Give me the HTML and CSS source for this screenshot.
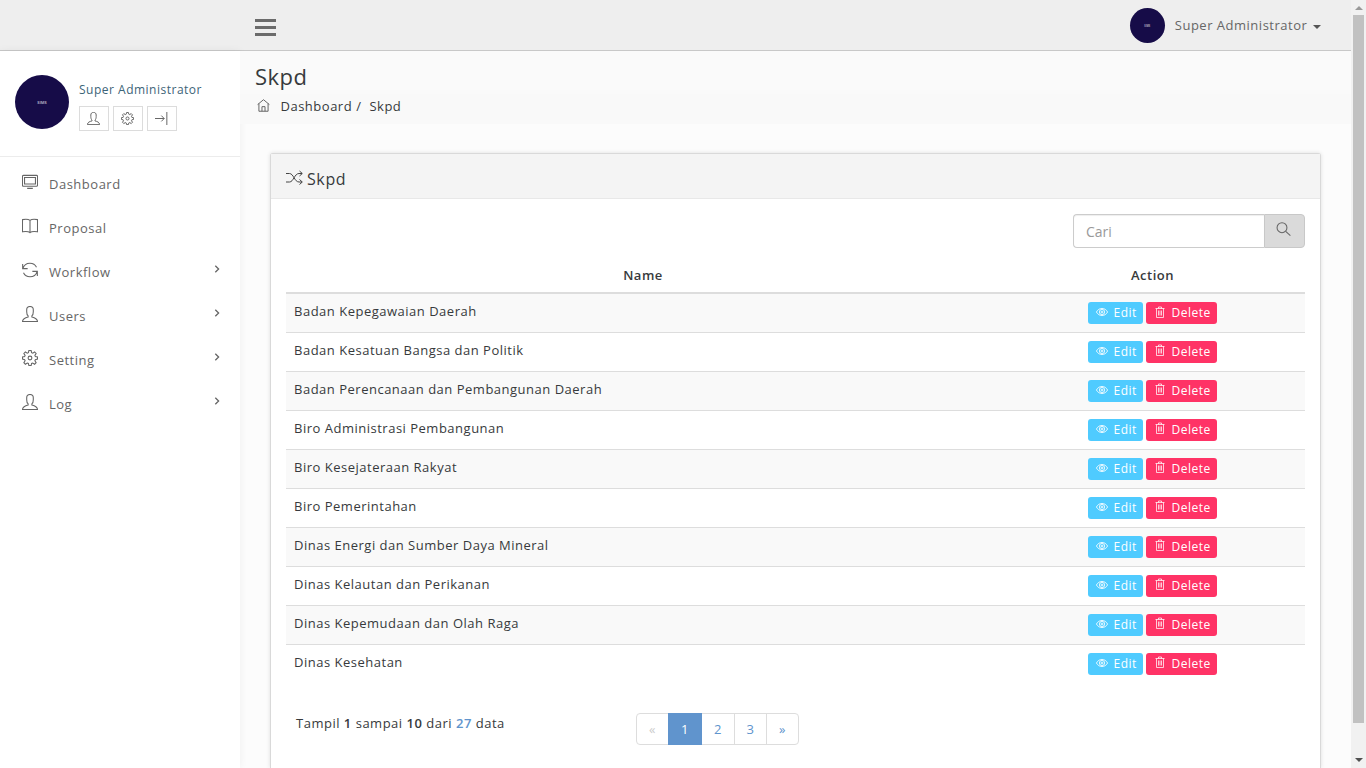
FILE: index.html
```html
<!DOCTYPE html>
<html lang="id">
<head>
<meta charset="utf-8">
<title>Skpd</title>
<link rel="stylesheet" href="styles.css">
</head>
<body>
<svg class="sprite" aria-hidden="true">
  <symbol id="user" viewBox="0 0 17 17"><path d="M6.500 10.500C5.500 9.700 5 8 5 6V4C5 1.800 6.300.5 8.500.5S12 1.800 12 4V6c0 2-.5 3.700-1.500 4.500v1.200c3 .8 5.700 1.500 6 4.800H.5c.3-3.300 3-4 6-4.800z"/></symbol>
  <symbol id="gear" viewBox="0 0 17 17"><path d="M7.300.6h2.400l.5 2.300 1.200.5 2-1.300 1.600 1.600-1.300 2 .5 1.300 2.300.4v2.300l-2.300.5-.5 1.200 1.300 2-1.600 1.700-2-1.300-1.200.5-.5 2.200H7.300l-.5-2.200-1.200-.5-2 1.300L2 13.400l1.300-2-.5-1.200-2.300-.5V7.400L2.800 7l.5-1.300-1.300-2 1.600-1.600 2 1.300 1.200-.5z"/><circle cx="8.500" cy="8.500" r="2"/></symbol>
  <symbol id="logout" viewBox="0 0 17 17"><path d="M0 8.500h12M8.300 4.700 12 8.500l-3.700 3.800M15.500 0v17"/></symbol>
  <symbol id="monitor" viewBox="0 0 17 17"><path d="M1.500 1.500h14q1 0 1 1v9.500q0 1-1 1h-14q-1 0-1-1v-9.500q0-1 1-1zM2.700 3.700h11.600v7h-11.600zM5.500 15.300h6"/></symbol>
  <symbol id="book" viewBox="0 0 17 17"><path d="M8.500 2.500C7 1.300 3.500 1.200.5 1.700v13c3-.5 6.500-.4 8 .9 1.500-1.300 5-1.400 8-.9V1.700c-3-.5-6.500-.4-8 .8zM8.500 2.500v13"/></symbol>
  <symbol id="refresh" viewBox="0 0 17 17"><path d="M.7 2v5H6M1 6.800C2 3.300 5 1.300 8.500 1.300c3 0 5.600 1.600 6.900 4.300M16.300 15v-5H11M16 10.200c-1 3.500-4 5.500-7.500 5.500-3 0-5.600-1.600-6.900-4.300"/></symbol>
  <symbol id="home" viewBox="0 0 17 17"><path d="M.8 7.300 8.500.9l7.700 6.400M2.500 6v10h12V6M6.500 16v-6h4v6"/></symbol>
  <symbol id="shuffle" viewBox="0 0 17 17"><path d="M0 4.500h3.500c4 0 5 8.500 9.500 8.500h3M0 13h3.500C7.500 13 8.500 4.500 13 4.500h3M13.500 2l2.800 2.500L13.500 7M13.500 10.500l2.800 2.500-2.800 2.500"/></symbol>
  <symbol id="search" viewBox="0 0 17 17"><circle cx="6.800" cy="6.500" r="5.600"/><path d="m11 10.500 5.300 5"/></symbol>
  <symbol id="eye" viewBox="0 0 17 17"><path d="M.6 8.500C4 1.800 13 1.800 16.400 8.500 13 15.200 4 15.200.6 8.500z"/><circle cx="8.500" cy="8.500" r="3.700"/><circle cx="8.500" cy="8.500" r="1.300"/></symbol>
  <symbol id="trash" viewBox="0 0 12 12"><path d="M1.500 2.500h9M4.500 2.500v-1.500h3v1.500M2.500 2.500v9h7v-9M4.500 4.500v5M6 4.500v5M7.500 4.500v5"/></symbol>
  <symbol id="chevron" viewBox="0 0 10 10"><path d="m3.300 1.700 3.300 3.300-3.300 3.300"/></symbol>
</svg>
<div class="app">
  <header class="topbar">
    <div class="burger"><i></i><i></i><i></i></div>
    <div class="account"><div class="avatar small"><span>SIMS</span></div><span class="account-name">Super Administrator</span><i class="caret"></i></div>
  </header>
  <div class="columns">
    <aside class="sidebar">
      <section class="profile">
        <div class="avatar"><span>SIMS</span></div>
        <div class="profile-info">
          <div class="profile-name">Super Administrator</div>
          <div class="tools">
            <a><svg><use href="#user"/></svg></a><a><svg><use href="#gear"/></svg></a><a><svg><use href="#logout"/></svg></a>
          </div>
        </div>
      </section>
      <nav class="menu">
        <a><svg><use href="#monitor"/></svg><span>Dashboard</span></a>
        <a><svg><use href="#book"/></svg><span>Proposal</span></a>
        <a><svg><use href="#refresh"/></svg><span>Workflow</span><svg class="chev"><use href="#chevron"/></svg></a>
        <a><svg><use href="#user"/></svg><span>Users</span><svg class="chev"><use href="#chevron"/></svg></a>
        <a><svg><use href="#gear"/></svg><span>Setting</span><svg class="chev"><use href="#chevron"/></svg></a>
        <a><svg><use href="#user"/></svg><span>Log</span><svg class="chev"><use href="#chevron"/></svg></a>
      </nav>
    </aside>
    <main class="main">
      <div class="heading">
        <h1>Skpd</h1>
        <div class="crumbs"><svg><use href="#home"/></svg><span>Dashboard</span><span class="slash">/</span><span>Skpd</span></div>
      </div>
      <section class="panel">
        <div class="panel-head"><svg><use href="#shuffle"/></svg><h2>Skpd</h2></div>
        <div class="panel-body">
          <div class="search"><input type="text" placeholder="Cari"><button><svg><use href="#search"/></svg></button></div>
          <table>
            <thead><tr><th class="name">Name</th><th>Action</th></tr></thead>
            <tbody id="rows"></tbody>
          </table>
          <div class="foot">
            <div class="summary">Tampil <b>1</b> sampai <b>10</b> dari <b class="total">27</b> data</div>
            <div class="pages"><span class="off">«</span><span class="on">1</span><span class="two">2</span><span>3</span><span>»</span></div>
          </div>
        </div>
      </section>
    </main>
  </div>
</div>
<div class="scrollbar"><i class="up"></i><div class="thumb"></div><i class="down"></i></div>
<script src="rows.js"></script>
</body>
</html>
```
FILE: styles.css
```css
* { box-sizing: border-box; }
body { margin: 0; height: 768px; overflow: hidden; display: flex; background: #fcfcfc; color: #373a3c; font: 13px/20px "Open Sans", sans-serif; letter-spacing: .505px; }
.sprite { display: none; }
svg { display: block; flex: none; width: 17px; height: 17px; fill: none; stroke: #666; stroke-width: 1; }
.app { width: 1351px; height: 768px; display: flex; flex-direction: column; }
.topbar { height: 51px; flex: none; background: #eee; border-bottom: 1px solid #c8c8c8; display: flex; justify-content: space-between; padding: 8px 30px 0 255px; }
.burger { display: flex; flex-direction: column; gap: 4px; padding-top: 11px; }
.burger i { width: 21px; height: 3px; background: #6b6b6b; }
.account { display: flex; height: 35px; align-items: center; color: #666; }
.account-name { margin: -2px 0 0 10px; }
.caret { margin: 3px 0 0 5.700px; border: 4px solid transparent; border-top-color: #555; border-bottom: 0; }
.avatar { width: 54px; height: 54px; border-radius: 50%; background: #160c48; color: #aaa8bd; font: bold 4px/55px "Open Sans", sans-serif; letter-spacing: 0; text-align: center; }
.avatar.small { width: 35px; height: 35px; font-size: 2.500px; line-height: 37px; }
.columns { flex: 1; min-height: 0; display: flex; }
.sidebar { width: 240px; background: #fff; box-shadow: 0 0 8px rgba(0,0,0,.06); }
.profile { height: 106px; padding: 24px 15px 0; display: flex; gap: 10px; border-bottom: 1px solid #ececec; }
.profile-info { padding-top: 5px; }
.profile-name { font-size: 12px; color: #3c6478; letter-spacing: .5px; }
.tools { display: flex; gap: 4px; margin-top: 6px; }
.tools a { width: 30px; height: 25px; border: 1px solid #dcdcdc; display: flex; justify-content: center; align-items: center; }
.tools svg { width: 13px; height: 13px; margin-right: 1px; stroke-width: 1.300; }
.menu { padding-top: 4px; }
.menu a { height: 44px; display: flex; align-items: center; padding: 0 18px 0 21px; color: #666; }
.menu a > svg:first-child { width: 16px; height: 16px; margin: -2px 0 0 1px; stroke-width: 1.150; }
.menu span { margin: 2px 0 0 11px; }
.menu .chev { width: 10px; height: 10px; margin: -4px 0 0 auto; stroke-width: 1.300; }
.main { flex: 1; }
.heading { height: 73px; padding: 13px 15px 0; background: linear-gradient(#fafafa 43px, #f9f9f9 43px); }
h1 { margin: 0; font-size: 22px; line-height: 24px; font-weight: 400; letter-spacing: .5px; }
.crumbs { display: flex; align-items: center; margin-top: 8px; }
.crumbs svg { width: 13px; height: 13px; margin: -1px 11px 0 1.500px; stroke-width: 1.300; }
.slash { margin: 0 8px 0 4px; }
.panel { margin: 29px 30px 0; height: 615px; background: #fff; border: 1px solid #d9d9d9; border-bottom: 0; border-radius: 3px 3px 0 0; box-shadow: 0 0 4px rgba(0,0,0,.12); }
.panel-head { height: 45px; display: flex; align-items: center; padding: 6px 15px 0; background: #f4f4f4; border-bottom: 1px solid #e8e8e8; }
.panel-head svg { stroke: #444; margin-top: -3px; }
h2 { margin: 0 0 0 4px; font-size: 16px; font-weight: 400; letter-spacing: .6px; }
.panel-body { padding: 15px; }
.search { display: flex; width: 232px; height: 34px; margin-left: auto; }
.search input { width: 191px; padding: 1px 12px 0; border: 1px solid #ccc; border-right: 0; border-radius: 4px 0 0 4px; font: 14px "Open Sans", sans-serif; box-shadow: inset 0 1px 1px rgba(0,0,0,.07); }
.search input::placeholder { color: #999; }
.search button { width: 41px; padding: 0 12px 3px 11px; border: 1px solid #c8c8c8; border-radius: 0 4px 4px 0; background: #dadada; }
.search svg { width: 15px; height: 15px; stroke-width: 1.200; }
table { width: 100%; margin-top: 8px; border-collapse: collapse; table-layout: fixed; }
th { height: 37px; padding: 1px 8px 0; font-weight: 600; text-align: center; border-bottom: 2px solid #ddd; }
th.name { width: 714px; }
td { height: 39px; padding: 7px 8px; line-height: 20px; vertical-align: top; border-top: 1px solid #ddd; }
tbody tr:first-child td { border-top: 0; }
tbody tr:nth-child(odd) { background: #f9f9f9; }
.actions { display: flex; justify-content: center; gap: 3px; padding-top: 1px; }
.btn { display: flex; align-items: center; height: 22px; border-radius: 3px; color: #fff; font-size: 12px; letter-spacing: .5px; }
.btn svg { stroke: #fff; width: 12px; height: 12px; stroke-width: 1.200; margin: -2px 5.500px 0 8px; }
.btn.delete svg { stroke-width: .75; margin-top: -3px; }
.edit { width: 55px; background: #4fcbff; }
.delete { width: 71px; background: #ff3366; }
.foot { display: flex; align-items: flex-start; margin-top: 30px; padding-left: 10px; }
.summary { width: 340px; }
.summary b { font-weight: 600; }
.summary .total { color: #6094cd; }
.pages { display: flex; width: 163px; height: 32px; border: 1px solid #ddd; border-radius: 4px; color: #6094cd; line-height: 31px; text-align: center; }
.pages span { width: 32px; border-left: 1px solid #ddd; }
.pages .off { width: 31px; border: 0; color: #ccc; }
.pages .on { width: 34px; height: 32px; margin-top: -1px; background: #6094cd; border: 0; color: #fff; line-height: 33px; }
.pages .two { border: 0; }
.scrollbar { width: 15px; height: 768px; background: #f1f1f1; display: flex; flex-direction: column; align-items: center; }
.scrollbar .thumb { width: 11px; height: 708px; margin-top: 5px; background: #c1c1c1; }
.up { margin-top: 6px; border: 4px solid transparent; border-top: 0; border-bottom-color: #999; }
.down { margin-top: 35px; border: 4px solid transparent; border-bottom: 0; border-top-color: #505050; }
```
FILE: rows.js
```js
const units = [
  "Badan Kepegawaian Daerah", "Badan Kesatuan Bangsa dan Politik",
  "Badan Perencanaan dan Pembangunan Daerah", "Biro Administrasi Pembangunan",
  "Biro Kesejateraan Rakyat", "Biro Pemerintahan",
  "Dinas Energi dan Sumber Daya Mineral", "Dinas Kelautan dan Perikanan",
  "Dinas Kepemudaan dan Olah Raga", "Dinas Kesehatan"
];
document.getElementById("rows").innerHTML = units.map(name => `
  <tr><td>${name}</td><td><div class="actions">
    <a class="btn edit"><svg><use href="#eye"/></svg>Edit</a>
    <a class="btn delete"><svg><use href="#trash"/></svg>Delete</a>
  </div></td></tr>`).join("");
```
